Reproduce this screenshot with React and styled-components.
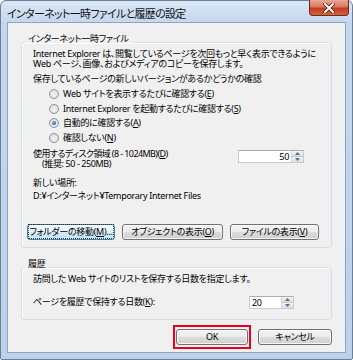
import React from "react";
import styled, { createGlobalStyle } from "styled-components";

const GlobalStyle = createGlobalStyle`
  html, body { margin: 0; padding: 0; background: #fff; }
  body {
    font-family: "Noto Sans", "Noto Sans CJK JP", sans-serif;
    font-feature-settings: "palt";
    color: #000;
  }
`;

const Window = styled.div`
  width: 353px;
  height: 360px;
  box-sizing: border-box;
  border: 1px solid #6b7f95;
  border-radius: 6px 6px 2px 2px;
  background: linear-gradient(180deg, #dae7f5 0%, #c4d7ed 22px, #bcd1e9 100%);
  padding: 0 6px 6px 6px;
  display: flex;
  flex-direction: column;
`;

const TitleBar = styled.div`
  height: 21px;
  display: flex;
  justify-content: space-between;
  align-items: flex-start;
`;

const Title = styled.div`
  font-family: "Noto Sans CJK JP", sans-serif;
  font-size: 11px;
  line-height: 12px;
  letter-spacing: -0.7px;
  padding-top: 6px;
  color: #111;
`;

const CloseButton = styled.div`
  width: 40px;
  height: 16px;
  box-sizing: border-box;
  margin-top: -1px;
  margin-right: -3px;
  border: 1px solid #6d2b20;
  border-top: none;
  border-radius: 0 0 4px 4px;
  background: linear-gradient(180deg, #e9a897 0%, #d97760 45%, #c43c1f 55%, #d4643f 100%);
  display: flex;
  align-items: center;
  justify-content: center;
`;

const Client = styled.div`
  flex: 1;
  box-sizing: border-box;
  border: 1px solid #8ea4bf;
  background: #f0f0f0;
  display: flex;
  flex-direction: column;
  font-size: 9px;
  letter-spacing: -0.3px;
`;

const Group = styled.fieldset`
  margin: ${p => p.$mt}px 13px 0 13px;
  padding: 0 12px ${p => p.$pb}px 11px;
  border: 1px solid #d5dfe5;
  border-radius: 3px;
  box-shadow: inset 1px 1px 0 #fff;
  min-width: 0;
`;

const Legend = styled.legend`
  margin-left: -8px;
  padding: 0 3px 6px 3px;
  line-height: 10px;
`;

const Text = styled.div`
  line-height: ${p => p.$lh || 10}px;
  margin-top: ${p => p.$mt || 0}px;
  padding-left: ${p => p.$indent || 0}px;
  letter-spacing: ${p => (p.$ls === undefined ? -0.3 : p.$ls)}px;
  white-space: nowrap;
`;

const RadioList = styled.div`
  margin-top: 3px;
`;

const RadioRow = styled.div`
  height: 14.5px;
  display: flex;
  align-items: center;
  gap: 4px;
  padding-left: 16px;
  line-height: 10px;
  white-space: nowrap;
`;

const Radio = styled.span`
  width: 10px;
  height: 10px;
  box-sizing: border-box;
  border-radius: 50%;
  border: 1px solid #8f9091;
  background: radial-gradient(circle at 50% 60%, #f6f6f6 0%, #e2e2e2 60%, #cfcfcf 100%);
  display: flex;
  align-items: center;
  justify-content: center;
  &::after {
    content: "";
    display: ${p => (p.$checked ? "block" : "none")};
    width: 4px;
    height: 4px;
    border-radius: 50%;
    background: radial-gradient(circle at 40% 35%, #8ac0f5 0%, #2c6bc4 60%, #173f86 100%);
  }
`;

const DiskRow = styled.div`
  display: flex;
  justify-content: space-between;
  align-items: flex-start;
  padding-right: ${p => p.$pr}px;
  margin-top: ${p => p.$mt || 0}px;
`;

const Spinner = styled.div`
  width: ${p => p.$w}px;
  height: 13px;
  box-sizing: border-box;
  margin-top: ${p => p.$mt || 0}px;
  border: 1px solid #c9cbd1;
  border-top-color: #abadb3;
  background: #fff;
  display: flex;
`;

const SpinValue = styled.div`
  flex: 1;
  line-height: 11px;
  text-align: ${p => p.$align};
  padding: 0 ${p => (p.$align === "right" ? 2 : 0)}px 0 ${p => (p.$align === "left" ? 2 : 0)}px;
`;

const SpinButtons = styled.div`
  width: 11px;
  display: flex;
  flex-direction: column;
  border-left: 1px solid #d4d6da;
`;

const SpinHalf = styled.div`
  flex: 1;
  display: flex;
  align-items: center;
  justify-content: center;
  background: linear-gradient(180deg, #f4f4f4, #dedede);
  border-top: ${p => (p.$bottom ? "1px solid #c2c4c8" : "none")};
`;

const ButtonRow = styled.div`
  display: flex;
  gap: 7px;
  margin-left: -6px;
  margin-top: ${p => p.$mt}px;
`;

const Button = styled.div`
  width: ${p => p.$w}px;
  height: 16px;
  box-sizing: border-box;
  border: 1px solid ${p => (p.$focus ? "#3c7fb1" : "#707070")};
  border-radius: 3px;
  background: ${p =>
    p.$focus
      ? "linear-gradient(180deg, #f4fafe 0%, #e6f3fc 50%, #d3ebfb 51%, #c6e4f8 100%)"
      : "linear-gradient(180deg, #f3f3f3 0%, #ebebeb 50%, #dcdcdc 51%, #d0d0d0 100%)"};
  box-shadow: inset 0 0 0 1px rgba(255, 255, 255, 0.75);
  line-height: 14px;
  text-align: center;
  white-space: nowrap;
`;

const FocusText = styled.span`
  outline: 1px dotted #333;
  outline-offset: 0;
`;

const Footer = styled.div`
  display: flex;
  justify-content: flex-end;
  align-items: center;
  gap: 7px;
  padding-right: 13px;
  margin-top: 5px;
`;

const Highlight = styled.div`
  border: 2px solid #e8001c;
  padding: 2px 1px;
`;

const Arrow = ({ up }) => (
  <svg width="5" height="3" viewBox="0 0 5 3">
    <path d={up ? "M0 3 L2.5 0 L5 3 Z" : "M0 0 L2.5 3 L5 0 Z"} fill="#4a6ea8" />
  </svg>
);

const SpinBox = ({ value, w, align, mt }) => (
  <Spinner $w={w} $mt={mt}>
    <SpinValue $align={align}>{value}</SpinValue>
    <SpinButtons>
      <SpinHalf><Arrow up /></SpinHalf>
      <SpinHalf $bottom><Arrow /></SpinHalf>
    </SpinButtons>
  </Spinner>
);

const Option = ({ checked, children }) => (
  <RadioRow>
    <Radio $checked={checked} />
    <span>{children}</span>
  </RadioRow>
);

export default function App() {
  return (
    <>
      <GlobalStyle />
      <Window>
        <TitleBar>
          <Title>インターネット一時ファイルと履歴の設定</Title>
          <CloseButton>
            <svg width="12" height="10" viewBox="0 0 12 10">
              <path d="M2 1 L10 9 M10 1 L2 9" stroke="#5a1e12" strokeWidth="3.6" strokeLinecap="square" />
              <path d="M2 1 L10 9 M10 1 L2 9" stroke="#fff" strokeWidth="2" strokeLinecap="square" />
            </svg>
          </CloseButton>
        </TitleBar>
        <Client>
          <Group $mt={11} $pb={7}>
            <Legend>インターネット一時ファイル</Legend>
            <Text $mt={-1}>Internet Explorer は、閲覧しているページを次回もっと早く表示できるように</Text>
            <Text $lh={9}>Web ページ、画像、およびメディアのコピーを保存します。</Text>
            <Text $mt={6}>保存しているページの新しいバージョンがあるかどうかの確認</Text>
            <RadioList>
              <Option>Web サイトを表示するたびに確認する(<u>E</u>)</Option>
              <Option>Internet Explorer を起動するたびに確認する(<u>S</u>)</Option>
              <Option checked>自動的に確認する(<u>A</u>)</Option>
              <Option>確認しない(<u>N</u>)</Option>
            </RadioList>
            <DiskRow $pr={15} $mt={4}>
              <div>
                <Text $ls={-0.6}>使用するディスク領域 (8 - 1024MB)(<u>D</u>)</Text>
                <Text $lh={9} $indent={9} $ls={-0.4}>(推奨: 50 - 250MB)</Text>
              </div>
              <SpinBox value="50" w={66} align="right" mt={1} />
            </DiskRow>
            <Text $mt={10}>新しい場所:</Text>
            <Text $mt={3}>D:¥インターネット¥Temporary Internet Files</Text>
            <ButtonRow $mt={23}>
              <Button $w={90} $focus><FocusText>フォルダーの移動(<u>M</u>)...</FocusText></Button>
              <Button $w={103}>オブジェクトの表示(<u>O</u>)</Button>
              <Button $w={91}>ファイルの表示(<u>V</u>)</Button>
            </ButtonRow>
          </Group>
          <Group $mt={11} $pb={10}>
            <Legend>履歴</Legend>
            <Text $mt={-1}>訪問した Web サイトのリストを保存する日数を指定します。</Text>
            <DiskRow $pr={25} $mt={12}>
              <Text $lh={12}>ページを履歴で保持する日数(<u>K</u>):</Text>
              <SpinBox value="20" w={45} align="left" />
            </DiskRow>
          </Group>
          <Footer>
            <Highlight>
              <Button $w={72}>OK</Button>
            </Highlight>
            <Button $w={74}>キャンセル</Button>
          </Footer>
        </Client>
      </Window>
    </>
  );
}
